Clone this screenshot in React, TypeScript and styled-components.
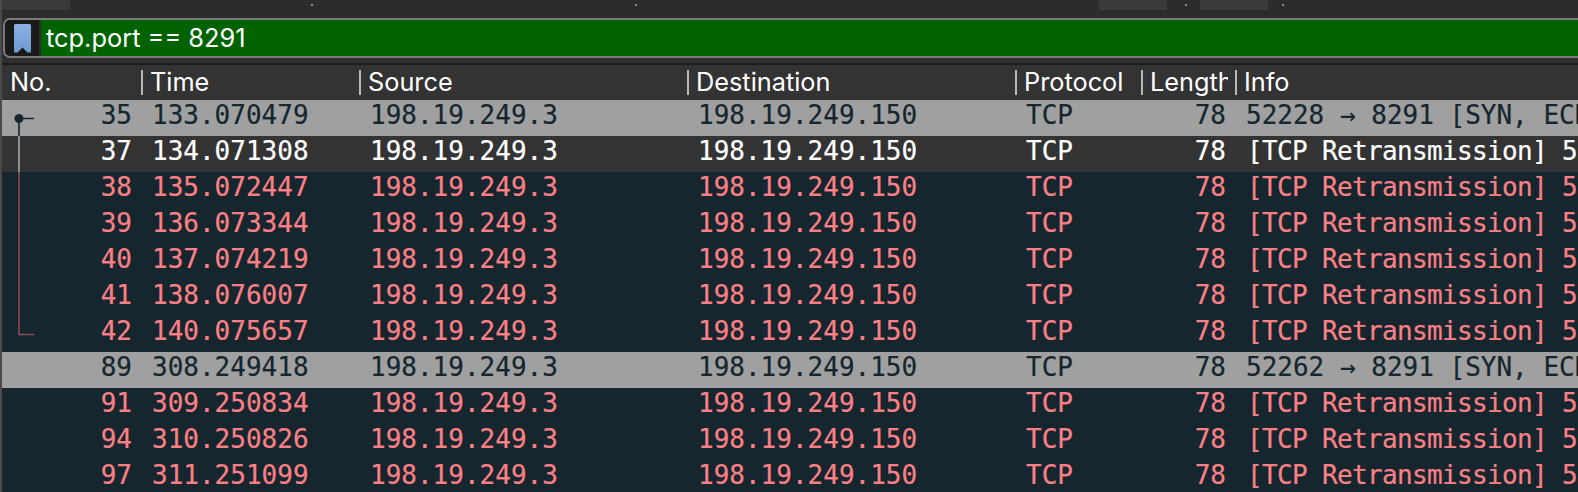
import React from 'react';
import styled, { createGlobalStyle } from 'styled-components';

type RowKind = 'syn' | 'current' | 'retrans';
type TreeMark = 'first' | 'middle' | 'last' | null;

interface Packet {
  no: number;
  time: string;
  info: string;
  kind: RowKind;
  mark: TreeMark;
}

const RETRANS = '[TCP Retransmission] 5';

const packets: Packet[] = [
  { no: 35, time: '133.070479', info: '52228 → 8291 [SYN, ECN', kind: 'syn', mark: 'first' },
  { no: 37, time: '134.071308', info: RETRANS, kind: 'current', mark: 'middle' },
  { no: 38, time: '135.072447', info: RETRANS, kind: 'retrans', mark: 'middle' },
  { no: 39, time: '136.073344', info: RETRANS, kind: 'retrans', mark: 'middle' },
  { no: 40, time: '137.074219', info: RETRANS, kind: 'retrans', mark: 'middle' },
  { no: 41, time: '138.076007', info: RETRANS, kind: 'retrans', mark: 'middle' },
  { no: 42, time: '140.075657', info: RETRANS, kind: 'retrans', mark: 'last' },
  { no: 89, time: '308.249418', info: '52262 → 8291 [SYN, ECN', kind: 'syn', mark: null },
  { no: 91, time: '309.250834', info: RETRANS, kind: 'retrans', mark: null },
  { no: 94, time: '310.250826', info: RETRANS, kind: 'retrans', mark: null },
  { no: 97, time: '311.251099', info: RETRANS, kind: 'retrans', mark: null },
];

const COLUMNS = '139px 218px 328px 328px 126px 94px 1fr';

const rowBackground: Record<RowKind, string> = {
  syn: '#a0a0a0',
  current: '#333333',
  retrans: '#15262e',
};

const rowColor: Record<RowKind, string> = {
  syn: '#15262e',
  current: '#ffffff',
  retrans: '#fb8086',
};

const treeColor: Record<RowKind, string> = {
  syn: '#15262e',
  current: '#a8a8a8',
  retrans: '#8a4c52',
};

const GlobalStyle = createGlobalStyle`
  html, body {
    margin: 0;
    padding: 0;
    background: #2c2c2c;
  }
`;

const Page = styled.div`
  width: 1578px;
  height: 492px;
  overflow: hidden;
  display: flex;
  background: #2c2c2c;
  font-family: Inter, "Liberation Sans", sans-serif;
`;

const SideEdge = styled.div`
  flex: 0 0 2px;
  background: #4a4a4a;
`;

const Main = styled.div`
  flex: 1;
  min-width: 0;
  display: flex;
  flex-direction: column;

  & > * {
    flex-shrink: 0;
  }
`;

const Toolbar = styled.div`
  height: 18px;
  display: flex;
  align-items: flex-start;
`;

const ToolbarButton = styled.div<{ $width: number; $offset: number }>`
  width: ${props => props.$width}px;
  height: 10px;
  margin-left: ${props => props.$offset}px;
  background: #3a3a3a;
`;

const ToolbarDot = styled.div<{ $offset: number }>`
  width: 2px;
  height: 2px;
  margin-top: 4px;
  margin-left: ${props => props.$offset}px;
  background: #8a8a8a;
`;

const FilterBar = styled.div`
  height: 40px;
  box-sizing: border-box;
  margin-left: 1px;
  display: flex;
  border: 2px solid #7c7c7c;
  border-right: none;
  border-radius: 7px 0 0 7px;
  overflow: hidden;
`;

const BookmarkButton = styled.div`
  flex: 0 0 34px;
  display: flex;
  align-items: center;
  justify-content: center;
  background: #1a1a1a;
`;

const FilterInput = styled.div`
  flex: 1;
  display: flex;
  align-items: center;
  padding-left: 5px;
  margin-left: 2px;
  background: #006300;
  color: #ffffff;
  font-size: 25.4px;
  line-height: 36px;
`;

const Divider = styled.div`
  height: 7px;
  box-sizing: border-box;
  background: #2f2f2f;
  border-bottom: 2px solid #1c1c1c;
`;

const HeaderRow = styled.div`
  height: 35px;
  display: grid;
  grid-template-columns: ${COLUMNS};
  background: #333333;
`;

const HeaderCell = styled.div<{ $first?: boolean }>`
  box-sizing: border-box;
  padding-left: ${props => (props.$first ? 8 : 9)}px;
  border-right: 7px solid transparent;
  background: ${props =>
    props.$first ? 'none' : 'linear-gradient(#b8b8b8, #b8b8b8) left center / 2px 25px no-repeat'};
  color: #ffffff;
  font-size: 25.3px;
  line-height: 33px;
  white-space: nowrap;
  overflow: hidden;
`;

const Row = styled.div<{ $kind: RowKind }>`
  height: 36px;
  display: grid;
  grid-template-columns: ${COLUMNS};
  background: ${props => rowBackground[props.$kind]};
  color: ${props => rowColor[props.$kind]};
  font-family: "DejaVu Sans Mono", "Liberation Mono", monospace;
  font-size: 26px;
  line-height: 31px;
  -webkit-text-stroke: 0.2px;
`;

const NoCell = styled.div`
  position: relative;
  padding-right: 9px;
  text-align: right;
`;

const TextCell = styled.div`
  padding-left: 11px;
  white-space: nowrap;
`;

const NumberCell = styled.div`
  padding-right: 9px;
  text-align: right;
`;

const InfoCell = styled.div<{ $retransmission: boolean }>`
  padding-left: ${props => (props.$retransmission ? 12 : 11)}px;
  letter-spacing: ${props => (props.$retransmission ? '-0.65px' : '0')};
  white-space: nowrap;
`;

const TreeIcon = styled.svg`
  position: absolute;
  left: 0;
  top: 0;
`;

const PacketTree: React.FC<{ mark: TreeMark; kind: RowKind }> = ({ mark, kind }) => {
  if (!mark) return null;
  const color = treeColor[kind];
  return (
    <TreeIcon width="40" height="36" viewBox="0 0 40 36" fill="none">
      {mark === 'first' && (
        <>
          <circle cx="17" cy="18.5" r="4.5" fill={color} />
          <path d="M17 18.5H32M17 18.5V36" stroke={color} strokeWidth="1.6" />
        </>
      )}
      {mark === 'middle' && <path d="M17 0V36" stroke={color} strokeWidth="1.6" />}
      {mark === 'last' && <path d="M17 0V18.5H32" stroke={color} strokeWidth="1.6" />}
    </TreeIcon>
  );
};

const BookmarkIcon = () => (
  <svg width="17" height="29" viewBox="0 0 17 29">
    <defs>
      <linearGradient id="bookmarkFill" x1="0" y1="0" x2="0" y2="1">
        <stop offset="0" stopColor="#8db2e2" />
        <stop offset="1" stopColor="#6c99d2" />
      </linearGradient>
    </defs>
    <path
      d="M1.5 0H15.5A1.5 1.5 0 0 1 17 1.5V28.5H13.5L8.5 23.5L3.5 28.5H0V1.5A1.5 1.5 0 0 1 1.5 0Z"
      fill="url(#bookmarkFill)"
    />
  </svg>
);

const App: React.FC = () => (
  <>
    <GlobalStyle />
    <Page>
      <SideEdge />
      <Main>
        <Toolbar>
          <ToolbarButton $width={68} $offset={0} />
          <ToolbarDot $offset={241} />
          <ToolbarDot $offset={322} />
          <ToolbarButton $width={68} $offset={462} />
          <ToolbarDot $offset={18} />
          <ToolbarButton $width={68} $offset={13} />
          <ToolbarDot $offset={14} />
        </Toolbar>
        <FilterBar>
          <BookmarkButton>
            <BookmarkIcon />
          </BookmarkButton>
          <FilterInput>tcp.port == 8291</FilterInput>
        </FilterBar>
        <Divider />
        <HeaderRow>
          <HeaderCell $first>No.</HeaderCell>
          <HeaderCell>Time</HeaderCell>
          <HeaderCell>Source</HeaderCell>
          <HeaderCell>Destination</HeaderCell>
          <HeaderCell>Protocol</HeaderCell>
          <HeaderCell>Length</HeaderCell>
          <HeaderCell>Info</HeaderCell>
        </HeaderRow>
        {packets.map(packet => (
          <Row key={packet.no} $kind={packet.kind}>
            <NoCell>
              <PacketTree mark={packet.mark} kind={packet.kind} />
              {packet.no}
            </NoCell>
            <TextCell>{packet.time}</TextCell>
            <TextCell>198.19.249.3</TextCell>
            <TextCell>198.19.249.150</TextCell>
            <TextCell>TCP</TextCell>
            <NumberCell>78</NumberCell>
            <InfoCell $retransmission={packet.kind !== 'syn'}>{packet.info}</InfoCell>
          </Row>
        ))}
      </Main>
    </Page>
  </>
);

export default App;
